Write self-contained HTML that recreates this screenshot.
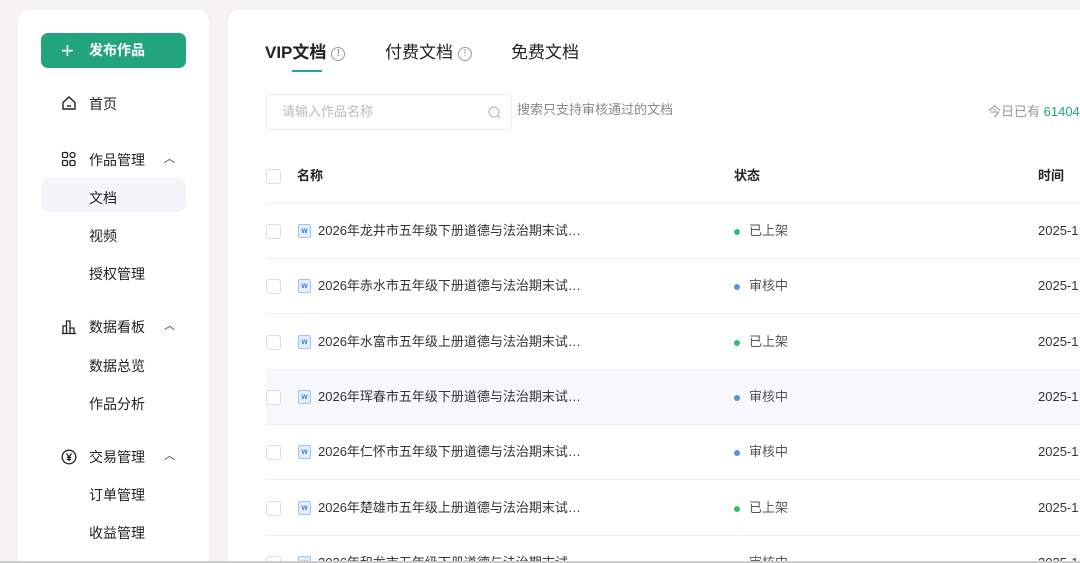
<!DOCTYPE html>
<html style="width:1080px;height:563px;overflow:hidden"><head><meta charset="utf-8"><style>
*{margin:0;padding:0;box-sizing:border-box}
body{width:1080px;height:563px;overflow:hidden;background:#f5f3f4;font-family:"Liberation Sans","Noto Sans CJK SC",sans-serif;color:#222;position:relative;line-height:20px}
.side{position:absolute;left:18px;top:10px;width:191px;height:600px;background:#fff;border-radius:12px}
.btn{position:absolute;left:23px;top:23px;width:145px;height:35px;background:#22a57c;border-radius:7px;color:#fff;font-size:14px;font-weight:bold;line-height:35px;padding-left:48px}
.btn span{position:absolute;left:20px;top:0;font-size:22px;font-weight:normal}
.it{position:absolute;left:71px;font-size:14px;color:#222}
.ic{position:absolute;left:43px}
.car{position:absolute;left:146px;font-size:11px;color:#333}
.sel{position:absolute;left:23px;top:168px;width:145px;height:34px;background:#f4f5fb;border-radius:8px}
.main{position:absolute;left:228px;top:10px;width:860px;height:600px;background:#fff;border-radius:12px}
.tab{position:absolute;top:31px;font-size:17px;color:#222;line-height:24px}
.info{display:inline-block;width:14px;height:14px;border:1px solid #999;border-radius:50%;font-size:10px;color:#999;text-align:center;line-height:12px;vertical-align:2px;margin-left:5px}
.srch{position:absolute;left:38px;top:84px;width:246px;height:36px;border:1px solid #eee;border-radius:4px;font-size:13px;color:#bbb;line-height:34px;padding-left:15px}
.cb{position:absolute;left:38px;width:15px;height:15px;border:1px solid #ddd;border-radius:3px}
.t{position:absolute;font-size:13px;color:#333;line-height:20px}
</style></head><body>
<div class="side">
<div class="btn"><span>+</span>发布作品</div>
<svg class="ic" style="top:85px" width="16" height="16" viewBox="0 0 16 16" fill="none" stroke="#222" stroke-width="1.4"><path d="M2 7.5L8 2l6 5.5V14H2z"/><path d="M6 11h4"/></svg>
<div class="it" style="top:84px">首页</div>
<svg class="ic" style="top:141px" width="16" height="16" viewBox="0 0 16 16" fill="none" stroke="#222" stroke-width="1.3"><rect x="1.5" y="1.5" width="5" height="5" rx="1.2"/><circle cx="11.5" cy="4" r="2.5"/><rect x="1.5" y="9.5" width="5" height="5" rx="1.2"/><rect x="9" y="9.5" width="5" height="5" rx="1.2"/></svg>
<div class="it" style="top:140px">作品管理</div><div class="car" style="top:139px">︿</div>
<div class="sel"></div>
<div class="it" style="top:178px">文档</div>
<div class="it" style="top:216px">视频</div>
<div class="it" style="top:254px">授权管理</div>
<svg class="ic" style="top:309px" width="16" height="16" viewBox="0 0 16 16" fill="none" stroke="#222" stroke-width="1.3"><path d="M1 14.5h14M2 14.5V7h3.5v7.5M5.5 14.5V2h3.5v12.5M9 14.5V9h4v5.5"/></svg>
<div class="it" style="top:307px">数据看板</div><div class="car" style="top:306px">︿</div>
<div class="it" style="top:346px">数据总览</div>
<div class="it" style="top:384px">作品分析</div>
<svg class="ic" style="top:439px" width="16" height="16" viewBox="0 0 16 16" fill="none" stroke="#222" stroke-width="1.3"><circle cx="8" cy="8" r="6.8"/><path d="M5.5 4.5L8 8l2.5-3.5M8 8v4M5.8 8.5h4.4M5.8 10.5h4.4"/></svg>
<div class="it" style="top:437px">交易管理</div><div class="car" style="top:436px">︿</div>
<div class="it" style="top:475px">订单管理</div>
<div class="it" style="top:513px">收益管理</div>
</div>
<div class="main">
<div class="tab" style="left:37px;font-weight:bold">VIP文档<span class="info">!</span></div>
<div style="position:absolute;left:64px;top:60px;width:30px;height:2px;background:#22a5a0"></div>
<div class="tab" style="left:157px">付费文档<span class="info">!</span></div>
<div class="tab" style="left:283px">免费文档</div>
<div class="srch">请输入作品名称
<svg style="position:absolute;right:10px;top:11px" width="13" height="13" viewBox="0 0 13 13" fill="none" stroke="#bbb" stroke-width="1.2"><circle cx="6" cy="6" r="5"/><path d="M10 10l2 2"/></svg></div>
<div class="t" style="left:289px;top:90px;color:#888">搜索只支持审核通过的文档</div>
<div class="t" style="left:760px;top:92px;color:#999">今日已有 <span style="color:#22a57c">61404</span></div>
<div class="cb" style="top:159px"></div>
<div class="t" style="left:69px;top:156px;font-weight:bold;color:#222">名称</div>
<div class="t" style="left:506px;top:156px;font-weight:bold;color:#222">状态</div>
<div class="t" style="left:810px;top:156px;font-weight:bold;color:#222">时间</div>
<div style="position:absolute;left:38px;top:193px;width:830px;height:1px;background:#eef0f2"></div>
</div>
<div id="rows"></div>
<script>
var d=[["龙井市五年级下册",1],["赤水市五年级下册",0],["水富市五年级上册",1],["珲春市五年级下册",0],["仁怀市五年级下册",0],["楚雄市五年级上册",1],["和龙市五年级下册",0]];
var h="";
for(var i=0;i<d.length;i++){var y=204+i*55.3;
h+='<div style="position:absolute;left:266px;top:'+y+'px;width:830px;height:55px;border-bottom:1px solid #eef0f2;'+(i==3?'background:#f7f8fc;':'')+'">'+
'<div style="position:absolute;left:0;top:20px;width:15px;height:15px;border:1px solid #ddd;border-radius:3px;background:#fff"></div>'+
'<div style="position:absolute;left:32px;top:20px;width:13px;height:14px;background:#e3efff;border:1px solid #9cc3f3;border-radius:2px;font-size:8px;color:#3a7ee0;text-align:center;line-height:12px;font-weight:bold">w</div>'+
'<div style="position:absolute;left:52px;top:17px;font-size:13px;line-height:20px;color:#333">2026年'+d[i][0]+'道德与法治期末试…</div>'+
'<div style="position:absolute;left:468px;top:25px;width:6px;height:6px;border-radius:50%;background:'+(d[i][1]?'#2dc26b':'#5b8ee6')+'"></div>'+
'<div style="position:absolute;left:483px;top:17px;font-size:13px;line-height:20px;color:#555">'+(d[i][1]?'已上架':'审核中')+'</div>'+
'<div style="position:absolute;left:772px;top:17px;font-size:13px;line-height:20px;color:#333">2025-1</div></div>';}
document.getElementById("rows").innerHTML=h;
</script>
<div style="position:absolute;left:0;top:561px;width:1080px;height:2px;background:#ccc"></div>
</body></html>
